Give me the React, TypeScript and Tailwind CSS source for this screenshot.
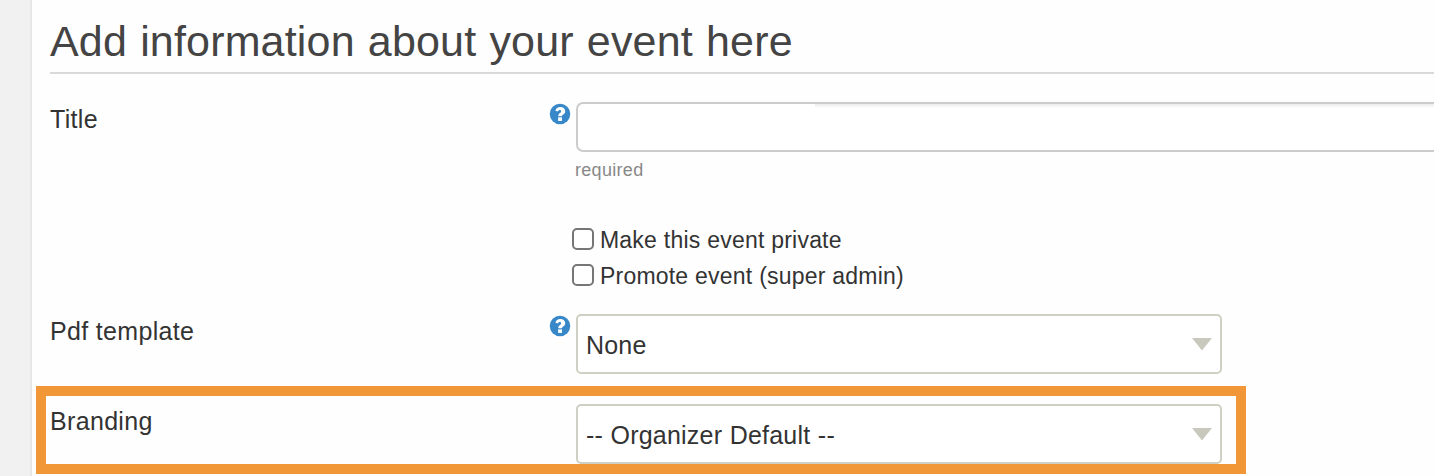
import type { ReactNode } from "react";

function HelpIcon() {
  return (
    <svg viewBox="-0.5 -0.5 21 21" className="mt-px -ml-px h-[22px] w-[22px] shrink-0" aria-hidden="true">
      <circle cx="10" cy="10" r="9.8" fill="#3787c9" />
      <path
        d="M5.6 7C6.2 4.6 7.8 3.4 10.2 3.4c2.7 0 4.8 1.5 4.8 3.9 0 3-3.2 3.2-3.2 4.9H8.3c0-3.1 2.7-3.2 2.7-4.7 0-.8-.5-1.2-1.3-1.2-.8 0-1.2.6-1.6 1.3z"
        fill="#fff"
      />
      <rect x="8.2" y="13.2" width="3.7" height="3.4" fill="#fff" />
    </svg>
  );
}

function Row({ label, help, children }: { label: string; help?: boolean; children: ReactNode }) {
  return (
    <div className="flex items-start">
      <div className="w-[500px] shrink-0 text-[25px] leading-[34px] tracking-[0.33px]">{label}</div>
      <div className="flex w-[26px] shrink-0">{help && <HelpIcon />}</div>
      {children}
    </div>
  );
}

function Select({ value }: { value: string }) {
  return (
    <button
      type="button"
      className="flex h-[60px] w-[646px] items-center justify-between rounded-[5px] border-2 border-[#cfcfc3] bg-white pr-2 pl-2 text-left text-[25px] leading-[30px] tracking-[0.2px] [word-spacing:0.4px]"
    >
      <span className="pt-0.5">{value}</span>
      <svg viewBox="0 0 20 12" className="h-3 w-5" aria-hidden="true">
        <path d="M0 0h20L10 12.5z" fill="#c8c8bc" />
      </svg>
    </button>
  );
}

function Check({ label }: { label: string }) {
  return (
    <label className="flex h-9 items-center">
      <input
        type="checkbox"
        className="h-[22px] w-[22px] appearance-none rounded-[5px] border-2 border-[#767676] bg-white"
      />
      <span className="pt-0.5 pl-1.5 text-[23px] leading-[34px] tracking-[0.2px] [word-spacing:0.2px]">{label}</span>
    </label>
  );
}

export default function App() {
  return (
    <div className="relative flex h-[476px] w-full overflow-hidden bg-[#fefefe] font-['Liberation_Sans',Arial,sans-serif] text-[#333333]">
      <aside className="w-8 shrink-0 border-r-2 border-[#e7e7e7] bg-[#f1f1f1]" />
      <main className="min-w-0 flex-1 pl-[18px]">
        <h1 className="h-[74px] border-b-2 border-[#d9d9d9] pt-4 text-[43px] leading-[50px] tracking-[0.17px] [word-spacing:1px] whitespace-nowrap text-[#444444]">
          Add information about your event here
        </h1>
        <div className="h-[240px] pt-7">
          <Row label="Title" help>
            <div className="min-w-0 flex-1">
              <div className="flex h-[50px] rounded-l-[7px] border-2 border-r-0 border-[#cccccc] bg-white">
                <input type="text" aria-label="Title" className="w-[237px] bg-transparent outline-none" />
                <div className="h-1 flex-1 bg-linear-to-b from-[#ebebeb] to-white" />
              </div>
              <div className="-ml-px pt-1 text-[18px] leading-7 tracking-[0.3px] text-[#888888]">required</div>
            </div>
          </Row>
          <div className="ml-[522px] pt-[37px]">
            <Check label="Make this event private" />
            <Check label="Promote event (super admin)" />
          </div>
        </div>
        <div className="flex flex-col gap-[30px]">
          <Row label="Pdf template" help>
            <Select value="None" />
          </Row>
          <Row label="Branding">
            <Select value="-- Organizer Default --" />
          </Row>
        </div>
      </main>
      <div className="pointer-events-none absolute top-[386px] left-9 h-[88px] w-[1210px] border-10 border-[#f19737]" />
    </div>
  );
}
